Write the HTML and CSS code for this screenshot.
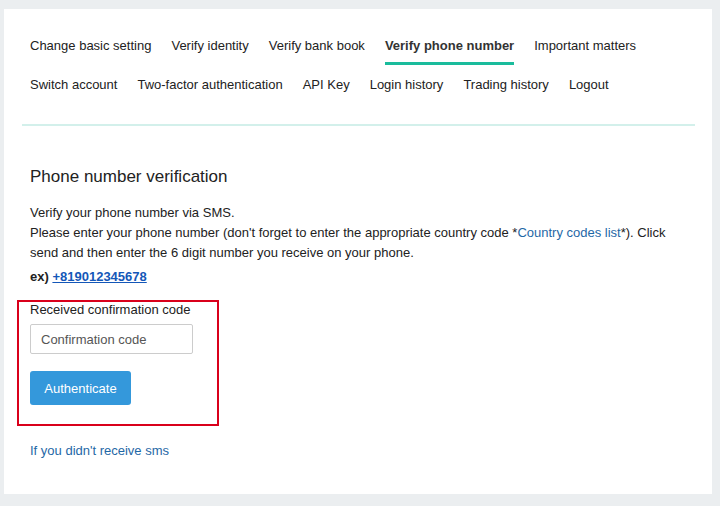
FILE: index.html
```html
<!DOCTYPE html>
<html lang="en">
<head>
  <meta charset="UTF-8" />
  <meta name="viewport" content="width=device-width, initial-scale=1" />
  <title>Phone number verification</title>
  <link rel="stylesheet" href="styles.css">
</head>
<body>
  <div class="card">
    <nav class="tabs">
      <ul class="tab-row">
        <li><a href="#">Change basic setting</a></li>
        <li><a href="#">Verify identity</a></li>
        <li><a href="#">Verify bank book</a></li>
        <li><a href="#" class="active">Verify phone number</a></li>
        <li><a href="#">Important matters</a></li>
      </ul>
      <ul class="tab-row">
        <li><a href="#">Switch account</a></li>
        <li><a href="#">Two-factor authentication</a></li>
        <li><a href="#">API Key</a></li>
        <li><a href="#">Login history</a></li>
        <li><a href="#">Trading history</a></li>
        <li><a href="#">Logout</a></li>
      </ul>
    </nav>

    <div class="content">
      <h2>Phone number verification</h2>
      <p class="intro">
        Verify your phone number via SMS.<br>
        Please enter your phone number (don't forget to enter the appropriate country code *<a href="#">Country codes list</a>*). Click send and then enter the 6 digit number you receive on your phone.
      </p>
      <p class="example">ex) <a href="#">+819012345678</a></p>

      <form class="code-box">
        <label for="code">Received confirmation code</label>
        <input type="text" id="code" name="code" placeholder="Confirmation code" />
        <button type="submit">Authenticate</button>
      </form>

      <a href="#" class="resend">If you didn't receive sms</a>
    </div>
  </div>
</body>
</html>
```

FILE: styles.css
```css
body {
  margin: 0;
  background: #ebeef0;
  font-family: 'Liberation Sans', Arial, sans-serif;
  font-size: 13px;
  color: #222;
}
.card {
  box-sizing: border-box;
  width: 708px;
  height: 485px;
  margin: 9px 0 0 4px;
  padding: 27px 17px 0 18px;
  background: white;
}
.tabs {
  padding-left: 8px;
  padding-bottom: 20px;
  border-bottom: 2px solid #d3f0eb;
}
.tab-row {
  display: flex;
  gap: 20px;
  margin: 0;
  padding: 0;
  list-style: none;
}
.tab-row + .tab-row {
  margin-top: 10px;
}
.tab-row a {
  display: block;
  line-height: 20px;
  padding-bottom: 6px;
  border-bottom: 3px solid transparent;
  color: #222;
  text-decoration: none;
}
.tab-row a.active {
  font-weight: 700;
  color: #333;
  border-bottom-color: #1abc9c;
}
.content {
  padding-left: 8px;
}
h2 {
  margin: 39px 0 14px;
  font-size: 17px;
  font-weight: 400;
  line-height: 24px;
  color: #222;
}
.intro {
  margin: 0;
  line-height: 20px;
}
.intro a,
.resend {
  color: #1f68a6;
  text-decoration: none;
}
.example {
  margin: 4px 0 13px;
  line-height: 20px;
  font-weight: 700;
}
.example a {
  color: #1457b8;
}
.code-box {
  display: flex;
  flex-direction: column;
  align-items: flex-start;
  width: 176px;
  margin-left: -13px;
  padding: 0 11px 19px;
  border: 2px solid #d9001b;
}
.code-box label {
  line-height: 16px;
  margin-bottom: 6px;
}
.code-box input {
  box-sizing: border-box;
  width: 163px;
  height: 30px;
  padding: 0 10px;
  border: 1px solid #ccc;
  border-radius: 2px;
  font-family: inherit;
  font-size: 13px;
  color: #333;
}
.code-box input::placeholder {
  color: #555;
}
.code-box button {
  width: 101px;
  height: 34px;
  margin-top: 17px;
  border: none;
  border-radius: 3px;
  background: #3498db;
  color: white;
  font-family: inherit;
  font-size: 13px;
  cursor: pointer;
}
.resend {
  display: inline-block;
  margin-top: 15px;
  line-height: 20px;
}
```
